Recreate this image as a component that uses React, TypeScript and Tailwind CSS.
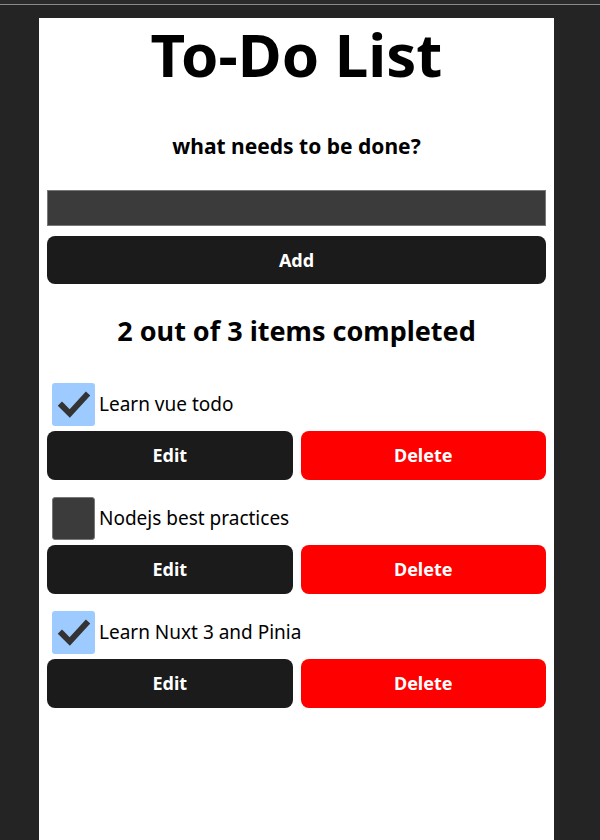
import React, { useState } from "react";

type Todo = { id: number; text: string; done: boolean };

const initialTodos: Todo[] = [
  { id: 1, text: "Learn vue todo", done: true },
  { id: 2, text: "Nodejs best practices", done: false },
  { id: 3, text: "Learn Nuxt 3 and Pinia", done: true },
];

const CheckBox: React.FC<{ checked: boolean; onToggle: () => void }> = ({ checked, onToggle }) => (
  <button
    onClick={onToggle}
    className={
      checked
        ? "w-[43px] h-[43px] rounded-[3px] bg-[#9ecbff] flex items-center justify-center shrink-0"
        : "w-[43px] h-[43px] rounded-[3px] bg-[#3b3b3b] border border-[#777] shrink-0"
    }
  >
    {checked && (
      <svg viewBox="0 0 24 24" className="w-[34px] h-[34px]">
        <path d="M3.5 12.5 L9 18 L20.5 5.5" fill="none" stroke="#333" strokeWidth="4.2" strokeLinecap="square" />
      </svg>
    )}
  </button>
);

export default function App() {
  const [todos, setTodos] = useState<Todo[]>(initialTodos);
  const done = todos.filter((t) => t.done).length;

  return (
    <div className="min-h-[840px] bg-[#242424] font-['Noto_Sans',sans-serif]">
      <div className="h-[4px] bg-[#2a2a2a]" />
      <div className="h-px bg-[#8a8a8a]" />
      <div className="pt-[13px] flex">
        <div className="ml-[39px] w-[515px] min-h-[822px] bg-white px-2 text-black">
          <h1 className="text-center font-bold text-[60px] leading-[72px]">To-Do List</h1>
          <h2 className="text-center font-bold text-[21px] leading-[32px] mt-[40px]">what needs to be done?</h2>
          <input className="mt-[28px] w-full h-[36px] bg-[#3b3b3b] border border-[#777] outline-none" />
          <button className="mt-[10px] w-full h-[48px] rounded-[8px] bg-[#1b1b1b] text-white font-bold text-[18px]">
            Add
          </button>
          <h2 className="text-center font-bold text-[27px] leading-[42px] mt-[26px]">
            {done} out of {todos.length} items completed
          </h2>
          <ul className="mt-[31px] flex flex-col gap-[17px]">
            {todos.map((t) => (
              <li key={t.id} className="flex flex-col gap-[5px]">
                <div className="flex items-center gap-[4px] pl-[5px]">
                  <CheckBox
                    checked={t.done}
                    onToggle={() =>
                      setTodos((prev) => prev.map((p) => (p.id === t.id ? { ...p, done: !p.done } : p)))
                    }
                  />
                  <span className="text-[19px]">{t.text}</span>
                </div>
                <div className="flex gap-2">
                  <button className="flex-1 h-[49px] rounded-[8px] bg-[#1b1b1b] text-white font-bold text-[18px]">
                    Edit
                  </button>
                  <button
                    onClick={() => setTodos((prev) => prev.filter((p) => p.id !== t.id))}
                    className="flex-1 h-[49px] rounded-[8px] bg-[#ff0000] text-white font-bold text-[18px]"
                  >
                    Delete
                  </button>
                </div>
              </li>
            ))}
          </ul>
        </div>
      </div>
    </div>
  );
}
